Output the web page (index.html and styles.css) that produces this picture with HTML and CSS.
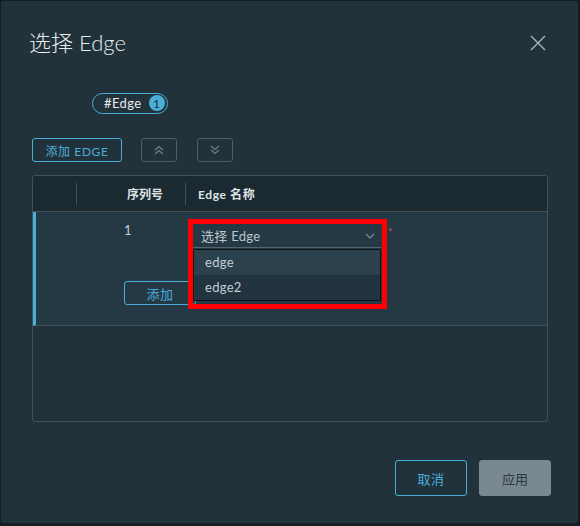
FILE: index.html
```html
<!DOCTYPE html>
<html lang="zh">
<head>
<meta charset="utf-8">
<title>选择 Edge</title>
<link rel="stylesheet" href="styles.css">
</head>
<body>
<div class="dialog">
  <div class="head">
    <h1 class="title">选择 Edge</h1>
    <button class="close" aria-label="关闭">
      <svg width="16" height="16" viewBox="0 0 16 16"><path d="M1 1L15 15M15 1L1 15" stroke="#aab4ba" stroke-width="1.4" fill="none"/></svg>
    </button>
  </div>
  <div class="chips">
    <span class="chip">#Edge <span class="badge">1</span></span>
  </div>
  <div class="toolbar">
    <button class="btn btn-outline">添加 EDGE</button>
    <button class="btn btn-icon" aria-label="上移">
      <svg width="12" height="10" viewBox="0 0 12 10"><path d="M2 5L6 1.5L10 5M2 9L6 5.5L10 9" stroke="#6f8089" stroke-width="1.2" fill="none"/></svg>
    </button>
    <button class="btn btn-icon btn-down" aria-label="下移">
      <svg width="12" height="10" viewBox="0 0 12 10"><path d="M2 1L6 4.5L10 1M2 5L6 8.5L10 5" stroke="#6f8089" stroke-width="1.2" fill="none"/></svg>
    </button>
  </div>
  <div class="grid">
    <div class="grid-head">
      <div class="hc hc-sel"></div>
      <div class="hc hc-num">序列号</div>
      <div class="hc hc-name">Edge 名称</div>
    </div>
    <div class="grid-row">
      <div class="rc rc-sel"></div>
      <div class="rc rc-num">
        <span class="num">1</span>
        <button class="btn btn-outline btn-add">添加</button>
      </div>
      <div class="rc rc-name">
        <div class="select-wrap">
          <div class="select">
            <span>选择 Edge</span>
            <svg width="10" height="6" viewBox="0 0 10 6"><path d="M1 1L5 5L9 1" stroke="#7d8c94" stroke-width="1.2" fill="none"/></svg>
          </div>
          <span class="req">*</span>
          <ul class="menu">
            <li class="item hover">edge</li>
            <li class="item">edge2</li>
          </ul>
          <div class="highlight"></div>
        </div>
      </div>
    </div>
    <div class="grid-empty"></div>
  </div>
  <div class="footer">
    <button class="btn btn-outline btn-lg">取消</button>
    <button class="btn btn-disabled btn-lg">应用</button>
  </div>
</div>
</body>
</html>
```
FILE: styles.css
```css
* { box-sizing: border-box; }
html, body { margin: 0; padding: 0; }
body {
  width: 580px;
  height: 526px;
  background: #141d22;
  font-family: "Lato", "Noto Sans CJK SC", sans-serif;
  color: #adbbc4;
  overflow: hidden;
}
.dialog {
  width: 577px;
  height: 522px;
  margin: 1px 0 0 1px;
  background: #22323b;
  border-radius: 3px;
  padding: 27px 27px 0 28px;
  display: flex;
  flex-direction: column;
}
.head {
  display: flex;
  justify-content: space-between;
  align-items: center;
  height: 30px;
}
.title {
  margin: 0;
  font-size: 22px;
  font-weight: 300;
  color: #e8ecee;
  font-family: "Lato", "Noto Sans CJK SC", sans-serif;
  line-height: 30px;
}
.close {
  background: none;
  border: 0;
  padding: 0;
  width: 16px;
  height: 16px;
  margin-right: 5px;
  display: flex;
}
.chips {
  margin-top: 34px;
  padding-left: 63px;
  height: 21px;
}
.chip {
  display: inline-flex;
  align-items: center;
  height: 21px;
  border: 1px solid #49afd9;
  border-radius: 11px;
  padding: 0 2px 0 11px;
  font-size: 13px;
  letter-spacing: 0.4px;
  color: #e8ecee;
  gap: 7px;
}
.badge {
  width: 16px;
  height: 16px;
  border-radius: 50%;
  background: #49afd9;
  color: #1b2a32;
  font-size: 12px;
  letter-spacing: 0;
  display: inline-flex;
  align-items: center;
  justify-content: center;
}
.toolbar {
  margin-top: 25px;
  padding-left: 3px;
  display: flex;
  gap: 19px;
  height: 24px;
}
.btn-down { margin-left: 1px; }
.btn {
  font-family: "Lato", "Noto Sans CJK SC", sans-serif;
  background: transparent;
  border-radius: 3px;
  padding: 0;
  display: inline-flex;
  align-items: center;
  justify-content: center;
  cursor: pointer;
}
.btn-outline {
  border: 1px solid #49afd9;
  color: #49afd9;
  font-size: 12px;
  letter-spacing: 0.6px;
  height: 24px;
  width: 90px;
}
.btn-icon {
  border: 1px solid #4d5e67;
  width: 36px;
  height: 24px;
}
.grid {
  margin-top: 13px;
  margin-left: 3px;
  width: 516px;
  border: 1px solid #3e525c;
  border-radius: 3px;
  display: flex;
  flex-direction: column;
}
.grid-head {
  display: flex;
  height: 36px;
  background: #1b2931;
  border-bottom: 1px solid #3e525c;
  align-items: center;
}
.hc {
  font-size: 12px;
  font-weight: 700;
  color: #dfe4e7;
  height: 22px;
  display: flex;
  align-items: center;
}
.hc-sel { width: 44px; border-right: 1px solid #3e525c; }
.hc-num { width: 109px; justify-content: flex-end; padding-right: 22px; border-right: 1px solid #3e525c; }
.hc-name { padding-left: 12px; letter-spacing: 0.6px; }
.grid-row {
  display: flex;
  height: 114px;
  background: #253945;
  border-left: 3px solid #49afd9;
  border-bottom: 1px solid #3e525c;
}
.rc-sel { width: 41px; }
.rc-num {
  width: 116px;
  padding-left: 47px;
}
.num {
  display: block;
  margin-top: 10px;
  font-size: 13px;
  color: #c5cdd2;
}
.btn-add {
  margin-top: 43px;
  width: 72px;
  font-size: 13px;
}
.rc-name { flex: 1; }
.select-wrap {
  position: relative;
  margin-top: 12px;
  width: 188px;
}
.select {
  height: 24px;
  border-bottom: 1px solid #55666f;
  display: flex;
  align-items: center;
  justify-content: space-between;
  padding: 0 6px 0 8px;
  font-size: 13px;
  letter-spacing: 0.3px;
  color: #bcc6cb;
}
.req {
  position: absolute;
  left: 195px;
  top: 1px;
  color: #e05555;
  font-size: 10px;
}
.menu {
  position: absolute;
  left: 0;
  top: 25px;
  width: 188px;
  margin: 0;
  padding: 0;
  list-style: none;
  background: #22343f;
  border: 1px solid #0c1317;
  border-radius: 2px;
}
.item {
  height: 25px;
  line-height: 25px;
  padding-left: 11px;
  font-size: 13px;
  letter-spacing: 0.3px;
  color: #c5cdd2;
}
.item.hover { background: #2c414e; }
.highlight {
  position: absolute;
  left: -5px;
  top: -5px;
  width: 199px;
  height: 90px;
  border: 5px solid #ff0000;
  pointer-events: none;
}
.grid-empty {
  height: 95px;
}
.footer {
  margin-top: 38px;
  display: flex;
  justify-content: flex-end;
  gap: 12px;
}
.btn-lg {
  width: 72px;
  height: 36px;
  font-size: 13px;
}
.btn-disabled {
  background: #7a8890;
  border: 1px solid #7a8890;
  color: #2a3840;
}
```
